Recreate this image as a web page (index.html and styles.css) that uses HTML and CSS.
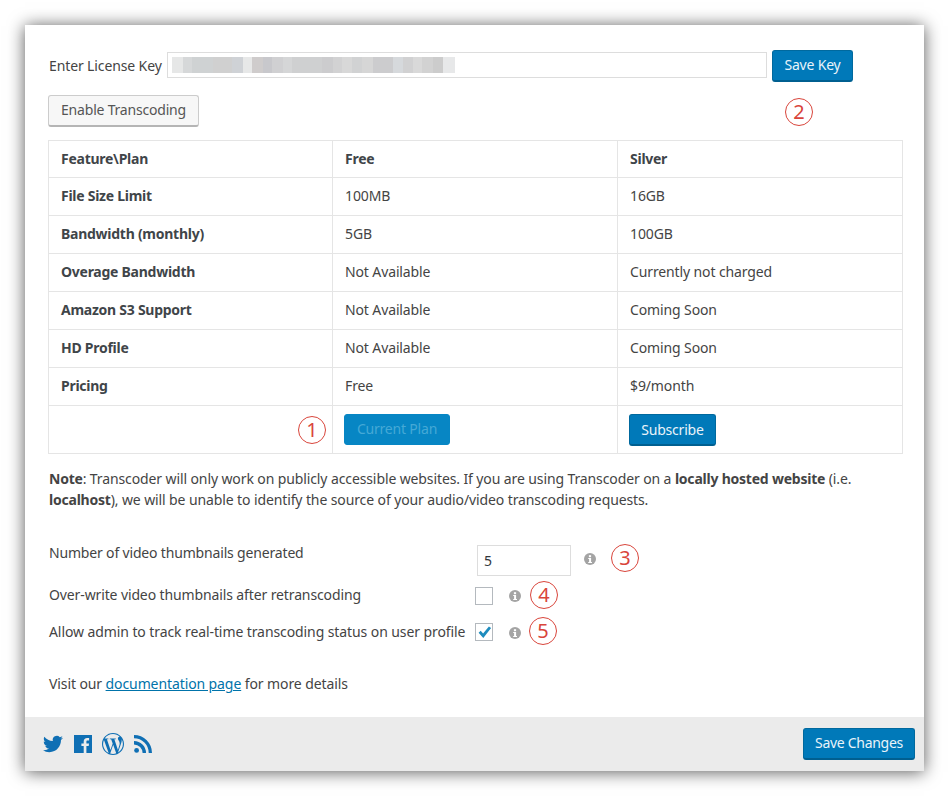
FILE: index.html
```html
<!DOCTYPE html>
<html lang="en">
<head>
<meta charset="utf-8">
<title>Transcoder settings</title>
<link rel="stylesheet" href="styles.css">
</head>
<body>
<main class="card">
  <div class="content">
    <div class="license">
      <label class="license-label" for="key">Enter License Key</label>
      <div class="key-field" id="key"><div class="key-blur"></div></div>
      <button class="btn primary save-key">Save Key</button>
      <span class="mark mark-2">2</span>
    </div>
    <button class="btn secondary enable">Enable Transcoding</button>
    <table class="plans">
      <tr><th>Feature\Plan</th><th>Free</th><th>Silver</th></tr>
      <tr><th>File Size Limit</th><td>100MB</td><td>16GB</td></tr>
      <tr><th>Bandwidth (monthly)</th><td>5GB</td><td>100GB</td></tr>
      <tr><th>Overage Bandwidth</th><td>Not Available</td><td>Currently not charged</td></tr>
      <tr><th>Amazon S3 Support</th><td>Not Available</td><td>Coming Soon</td></tr>
      <tr><th>HD Profile</th><td>Not Available</td><td>Coming Soon</td></tr>
      <tr><th>Pricing</th><td>Free</td><td>$9/month</td></tr>
      <tr class="actions">
        <td class="mark-cell"><span class="mark mark-1">1</span></td>
        <td><button class="btn primary current">Current Plan</button></td>
        <td><button class="btn primary subscribe">Subscribe</button></td>
      </tr>
    </table>
    <p class="note"><b>Note</b>: Transcoder will only work on publicly accessible websites. If you are using Transcoder on a <b>locally hosted website</b> (i.e. <b>localhost</b>), we will be unable to identify the source of your audio/video transcoding requests.</p>
    <div class="setting setting-thumbs">
      <span class="setting-label">Number of video thumbnails generated</span>
      <div class="num-field">5</div>
      <svg class="info info-thumbs" viewBox="0 0 12 12"><use href="#i"/></svg>
      <span class="mark mark-3">3</span>
    </div>
    <div class="setting setting-over">
      <span class="setting-label">Over-write video thumbnails after retranscoding</span>
      <span class="check"></span>
      <svg class="info info-over" viewBox="0 0 12 12"><use href="#i"/></svg>
      <span class="mark mark-4">4</span>
    </div>
    <div class="setting setting-track">
      <span class="setting-label">Allow admin to track real-time transcoding status on user profile</span>
      <span class="check"><svg class="tick" viewBox="0 0 16 16"><path d="M2.6 8.8l2.1-2 2.4 2.7L12.9 2.4l2.2 1.7L7.3 14z"/></svg></span>
      <svg class="info" viewBox="0 0 12 12"><use href="#i"/></svg>
      <span class="mark mark-5">5</span>
    </div>
    <p class="visit">Visit our <a href="#">documentation page</a> for more details</p>
  </div>
  <footer class="foot">
    <div class="socials">
      <svg class="tw" viewBox="0 0 24 24"><path d="M23.953 4.57a10 10 0 01-2.825.775 4.958 4.958 0 002.163-2.723c-.951.555-2.005.959-3.127 1.184a4.92 4.92 0 00-8.384 4.482C7.69 8.095 4.067 6.13 1.64 3.162a4.822 4.822 0 00-.666 2.475c0 1.71.87 3.213 2.188 4.096a4.904 4.904 0 01-2.228-.616v.06a4.923 4.923 0 003.946 4.827 4.996 4.996 0 01-2.212.085 4.936 4.936 0 004.604 3.417 9.867 9.867 0 01-6.102 2.105c-.39 0-.779-.023-1.17-.067a13.995 13.995 0 007.557 2.209c9.053 0 13.998-7.496 13.998-13.985 0-.21 0-.42-.015-.63A9.935 9.935 0 0024 4.59z"/></svg>
      <svg class="fb" viewBox="0 0 18 18"><path d="M0 0h18v18H12.4v-6.9h2.3l.35-2.7H12.4V6.7c0-.8.2-1.3 1.3-1.3h1.4V3c-.25 0-1.1-.1-2-.1-2 0-3.4 1.2-3.4 3.5v2H7.4v2.7h2.3V18H0z"/></svg>
      <svg class="wp" viewBox="0 0 24 24"><path d="M21.469 6.825c.84 1.537 1.318 3.3 1.318 5.175 0 3.979-2.156 7.456-5.363 9.325l3.295-9.527c.615-1.54.82-2.771.82-3.864 0-.405-.026-.78-.07-1.11m-7.981.105c.647-.03 1.232-.105 1.232-.105.582-.075.514-.93-.067-.899 0 0-1.755.135-2.88.135-1.064 0-2.85-.15-2.85-.15-.585-.03-.661.855-.075.885 0 0 .54.061 1.125.09l1.68 4.605-2.37 7.08L5.354 6.9c.649-.03 1.234-.1 1.234-.1.585-.075.516-.93-.065-.896 0 0-1.746.138-2.874.138-.2 0-.438-.008-.69-.015C4.911 3.15 8.235 1.215 12 1.215c2.809 0 5.365 1.072 7.286 2.833-.046-.003-.091-.009-.141-.009-1.06 0-1.812.923-1.812 1.914 0 .89.513 1.643 1.06 2.531.411.72.89 1.643.89 2.977 0 .915-.354 1.994-.821 3.479l-1.075 3.585-3.9-11.61.001.014zM12 22.784c-1.059 0-2.081-.153-3.048-.437l3.237-9.406 3.315 9.087c.024.053.05.101.078.149-1.12.393-2.325.609-3.582.609M1.211 12c0-1.564.336-3.05.935-4.39L7.29 21.709C3.694 19.96 1.212 16.271 1.211 12M12 0C5.385 0 0 5.385 0 12s5.385 12 12 12 12-5.385 12-12S18.615 0 12 0"/></svg>
      <svg class="rss" viewBox="0 0 18 18"><circle cx="2.6" cy="15.4" r="2.4"/><path d="M0 6v3.4A8.6 8.6 0 0 1 8.6 18H12A12 12 0 0 0 0 6z"/><path d="M0 0v3.3A14.7 14.7 0 0 1 14.7 18H18A18 18 0 0 0 0 0z"/></svg>
    </div>
    <button class="btn primary save-changes">Save Changes</button>
  </footer>
</main>
<svg class="defs" width="0" height="0"><defs><g id="i"><circle cx="6" cy="6" r="6"/><rect x="4.9" y="2.2" width="2.2" height="2" fill="#fff"/><path d="M4.2 5h2.9v3.9h.9v1H4.2v-1h.9V6h-.9z" fill="#fff"/></g></defs></svg>
</body>
</html>
```
FILE: styles.css
```css
* { box-sizing: border-box; }
html, body { margin: 0; padding: 0; background: #fff; }
body { font-family: "Noto Sans", "Open Sans", sans-serif; font-size: 14px; letter-spacing: -0.12px; color: #444; padding: 25px; width: 949px; height: 797px; overflow: hidden; }
b { letter-spacing: -0.22px; }
.card { width: 899px; height: 746px; background: #fff; box-shadow: 0 1px 16px rgba(0,0,0,.66); display: flex; flex-direction: column; }
.content { flex: 1; padding: 25px 21px 0 23px; }
.license { display: flex; align-items: center; position: relative; height: 32px; }
.license-label { margin-left: 1px; margin-top: -2px; width: 118px; flex: none; }
.key-field { width: 600px; height: 26px; border: 1px solid #ddd; padding: 4px; flex: none; margin-right: 5px; margin-top: -2px; background: #fff; }
.key-blur { width: 283px; height: 16px; background: linear-gradient(90deg, #e6e7e7 0 11px, #d6d8d9 11px 20px, #cfd2d3 20px 41px, #d0d0d0 41px 60px, #cfd2d6 60px 71px, #e7e8e8 71px 80px, #cfcccc 80px 91px, #c8c8cc 91px 100px, #d0d0d2 100px 111px, #d5d6d7 111px 120px, #cfd0d1 120px 150px, #ccccce 150px 161px, #d2d2d3 161px 170px, #d8d8d8 170px 180px, #d1d2d3 180px 190px, #d6d6d6 190px 201px, #ccccce 201px 221px, #d6d9dc 221px 231px, #d1d1d2 231px 241px, #d9d9d9 241px 250px, #d2d2d2 250px 261px, #cccccc 261px 271px, #e7e8e9 271px 283px); }
.btn { font: inherit; letter-spacing: -0.2px; border-radius: 3px; cursor: pointer; border: 1px solid; display: block; padding: 0 0 2px; }
.primary { background: #0079b9; border-color: #00699e; border-bottom-color: #005f90; border-bottom-width: 2px; color: #e9f3f9; }
.secondary { background: #f7f7f7; border-color: #ccc; border-bottom-color: #b5b5b5; border-bottom-width: 2px; color: #555; }
.save-key { width: 81px; height: 32px; flex: none; }
.enable { margin-top: 13px; width: 151px; height: 32px; }
.plans { margin-top: 13px; width: 855px; border-collapse: collapse; table-layout: fixed; }
.plans th, .plans td { border: 1px solid #e5e5e5; padding: 0 11px 2px 12px; height: 38px; text-align: left; font-weight: 400; }
.plans th { font-weight: 700; color: #3f4549; letter-spacing: -0.26px; }
.plans tr:first-child th { height: 37px; }
.plans th:nth-child(1), .plans .mark-cell { width: 284px; }
.plans th:nth-child(2) { width: 285px; }
.plans .actions td { height: 48px; padding: 0 11px; }
.mark-cell { position: relative; }
.current { width: 106px; height: 31px; background: #0786c4; border-color: #0786c4; border-bottom-width: 1px; color: #45a9d6; }
.subscribe { width: 87px; height: 32px; padding: 0; }
.note { margin: 14px 0 0 1px; line-height: 21px; width: 845px; letter-spacing: -0.11px; }
.setting { display: flex; align-items: center; position: relative; margin-left: 1px; }
.setting-label { width: 426px; flex: none; }
.setting-thumbs { margin-top: 35px; height: 31px; }
.setting-thumbs .setting-label { margin-top: -16px; letter-spacing: -0.17px; }
.setting-over { margin-top: 11px; height: 18px; }
.setting-track { margin-top: 18px; height: 18px; }
.setting-over .setting-label { margin-top: -4px; }
.setting-track .setting-label { margin-top: -2px; letter-spacing: -0.09px; }
.num-field { width: 94px; height: 31px; margin-left: 2px; border: 1px solid #ddd; padding: 0 6px; line-height: 30px; color: #32373c; flex: none; }
.info { width: 12px; height: 12px; fill: #a4a4a4; flex: none; margin-left: 16px; margin-top: 1px; }
.info-thumbs { margin-left: 13px; margin-top: -3px; }
.info-over { margin-top: -1px; }
.check { width: 18px; height: 18px; border: 1px solid #b4b9be; background: #fff; flex: none; display: block; }
.tick { width: 16px; height: 16px; fill: #1e8cbe; display: block; }
.mark { width: 28px; height: 28px; border: 1px solid #d9453b; border-radius: 50%; color: #d9453b; font-size: 20px; font-weight: 400; letter-spacing: 0; display: block; text-align: center; line-height: 26px; background: #fff; }
.mark-1 { position: absolute; right: 6px; top: 10px; }
.mark-2 { position: absolute; left: 737px; top: 48px; }
.mark-3, .mark-4, .mark-5 { flex: none; margin-top: -2px; }
.mark-3 { margin-left: 15px; margin-top: -6px; }
.mark-4 { margin-left: 9px; }
.mark-5 { margin-left: 8px; }
.visit { margin: 32px 0 0 1px; line-height: 21px; letter-spacing: -0.1px; }
.visit a { color: #0073aa; }
.foot { height: 54px; background: #ebebeb; display: flex; align-items: center; justify-content: space-between; padding: 0 9px 0 18px; flex: none; }
.socials { display: flex; align-items: center; }
.socials svg { fill: #0f6fb4; display: block; flex: none; }
.tw { width: 20px; height: 20px; }
.fb { width: 18px; height: 18px; margin-left: 11px; }
.wp { width: 22px; height: 22px; margin-left: 10px; }
.rss { width: 18px; height: 18px; margin-left: 10px; }
.save-changes { width: 112px; height: 32px; letter-spacing: -0.3px; }
.defs { position: absolute; }
```
